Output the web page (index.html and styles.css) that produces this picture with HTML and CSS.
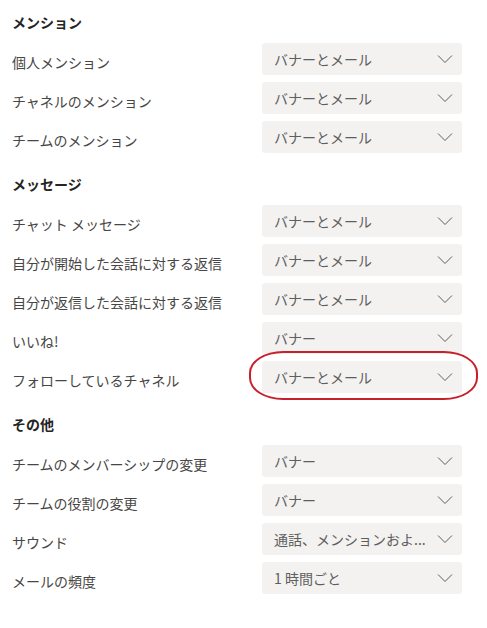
FILE: index.html
```html
<!DOCTYPE html>
<html lang="ja">
<head>
<meta charset="utf-8">
<link rel="stylesheet" href="styles.css">
</head>
<body>
<div class="page">
  <section class="section">
    <h2 class="section-title">メンション</h2>
    <div class="row"><span class="label">個人メンション</span><div class="select"><span class="value">バナーとメール</span><svg class="chev" viewBox="0 0 16 10"><path d="M1 1.5 L8 8.5 L15 1.5"/></svg></div></div>
    <div class="row"><span class="label">チャネルのメンション</span><div class="select"><span class="value">バナーとメール</span><svg class="chev" viewBox="0 0 16 10"><path d="M1 1.5 L8 8.5 L15 1.5"/></svg></div></div>
    <div class="row"><span class="label">チームのメンション</span><div class="select"><span class="value">バナーとメール</span><svg class="chev" viewBox="0 0 16 10"><path d="M1 1.5 L8 8.5 L15 1.5"/></svg></div></div>
  </section>
  <section class="section">
    <h2 class="section-title">メッセージ</h2>
    <div class="row"><span class="label">チャット メッセージ</span><div class="select"><span class="value">バナーとメール</span><svg class="chev" viewBox="0 0 16 10"><path d="M1 1.5 L8 8.5 L15 1.5"/></svg></div></div>
    <div class="row"><span class="label">自分が開始した会話に対する返信</span><div class="select"><span class="value">バナーとメール</span><svg class="chev" viewBox="0 0 16 10"><path d="M1 1.5 L8 8.5 L15 1.5"/></svg></div></div>
    <div class="row"><span class="label">自分が返信した会話に対する返信</span><div class="select"><span class="value">バナーとメール</span><svg class="chev" viewBox="0 0 16 10"><path d="M1 1.5 L8 8.5 L15 1.5"/></svg></div></div>
    <div class="row"><span class="label">いいね!</span><div class="select"><span class="value">バナー</span><svg class="chev" viewBox="0 0 16 10"><path d="M1 1.5 L8 8.5 L15 1.5"/></svg></div></div>
    <div class="row"><span class="label">フォローしているチャネル</span><div class="select highlighted"><span class="value">バナーとメール</span><svg class="chev" viewBox="0 0 16 10"><path d="M1 1.5 L8 8.5 L15 1.5"/></svg><span class="mark"></span></div></div>
  </section>
  <section class="section">
    <h2 class="section-title">その他</h2>
    <div class="row"><span class="label">チームのメンバーシップの変更</span><div class="select"><span class="value">バナー</span><svg class="chev" viewBox="0 0 16 10"><path d="M1 1.5 L8 8.5 L15 1.5"/></svg></div></div>
    <div class="row"><span class="label">チームの役割の変更</span><div class="select"><span class="value">バナー</span><svg class="chev" viewBox="0 0 16 10"><path d="M1 1.5 L8 8.5 L15 1.5"/></svg></div></div>
    <div class="row"><span class="label">サウンド</span><div class="select"><span class="value">通話、メンションおよ...</span><svg class="chev" viewBox="0 0 16 10"><path d="M1 1.5 L8 8.5 L15 1.5"/></svg></div></div>
    <div class="row"><span class="label">メールの頻度</span><div class="select"><span class="value">1 時間ごと</span><svg class="chev" viewBox="0 0 16 10"><path d="M1 1.5 L8 8.5 L15 1.5"/></svg></div></div>
  </section>
</div>
</body>
</html>
```
FILE: styles.css
```css
html, body {
  margin: 0;
  padding: 0;
  background: #ffffff;
}
body {
  font-family: "Noto Sans CJK JP", "Noto Sans", sans-serif;
  font-size: 14px;
  color: #424242;
}
.page {
  padding: 12px 0 0 12px;
  display: flex;
  flex-direction: column;
  gap: 21px;
}
.section {
  display: flex;
  flex-direction: column;
  gap: 7px;
}
.section-title {
  margin: 0 0 4px 0;
  font-size: 14px;
  line-height: 20px;
  height: 20px;
  font-weight: bold;
  color: #252423;
}
.row {
  display: grid;
  grid-template-columns: 250px 200px;
  align-items: center;
  height: 32px;
}
.label {
  line-height: 20px;
  white-space: nowrap;
  color: #484644;
  padding-top: 5px;
}
.select {
  position: relative;
  height: 32px;
  background: #f3f2f1;
  border-radius: 3px;
  display: flex;
  align-items: center;
  padding: 0 9px 0 12px;
  gap: 6px;
}
.value {
  flex: 1;
  min-width: 0;
  white-space: nowrap;
  color: #605e5c;
  line-height: 20px;
}
.chev {
  width: 16px;
  height: 10px;
  flex: none;
  fill: none;
  stroke: #605e5c;
  stroke-width: 1;
}
.mark {
  position: absolute;
  left: -13px;
  right: -16px;
  top: -10px;
  bottom: -7px;
  border: 2px solid #c8202b;
  border-radius: 34px / 22px;
  pointer-events: none;
}
```
